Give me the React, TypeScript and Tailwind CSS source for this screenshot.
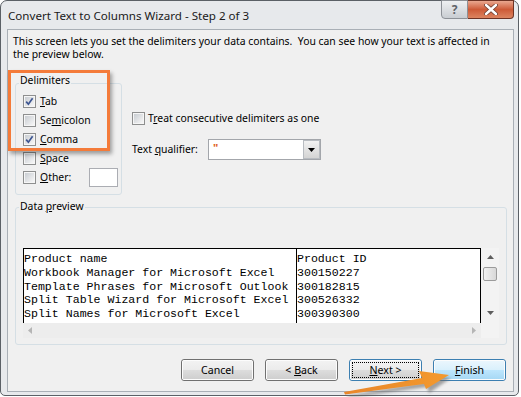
import React from "react";

function Box({ checked = false }: { checked?: boolean }) {
  return (
    <span className="relative flex h-[13px] w-[13px] shrink-0 border border-[#8e8f8f] bg-[#f6f6f6] p-[1px]">
      <span className="block h-full w-full bg-gradient-to-br from-[#c9cdd2] to-[#f7f7f7]" />
      {checked && (
        <svg className="absolute left-0 top-0" width="11" height="11" viewBox="0 0 11 11">
          <path d="M2.2 5.6 L4.4 8.2 L8.6 2.2" fill="none" stroke="#3d5591" strokeWidth="1.7" />
        </svg>
      )}
    </span>
  );
}

function U({ children }: { children: React.ReactNode }) {
  return <span className="underline underline-offset-[1px]">{children}</span>;
}

function Btn({
  children,
  kind = "normal",
}: {
  children: React.ReactNode;
  kind?: "normal" | "default" | "hover";
}) {
  const border =
    kind === "normal" ? "border-[#707070]" : "border-[#3c7fb1]";
  const top =
    kind === "hover"
      ? "bg-gradient-to-b from-[#eaf6fd] to-[#d9f0fc]"
      : "bg-gradient-to-b from-[#f2f2f2] to-[#ebebeb]";
  const bottom =
    kind === "hover"
      ? "bg-gradient-to-b from-[#bee6fd] to-[#a7d9f5]"
      : "bg-gradient-to-b from-[#dddddd] to-[#cfcfcf]";
  return (
    <div className={`relative h-[22px] w-[73px] overflow-hidden rounded-[3px] border ${border}`}>
      <div className="absolute inset-0 flex flex-col rounded-[2px] border border-[#fcfcfc]">
        <div className={`h-1/2 ${top}`} />
        <div className={`h-1/2 ${bottom}`} />
      </div>
      {kind === "default" && (
        <div className="absolute inset-[2px] border border-dotted border-black" />
      )}
      <div className="relative flex h-full items-center justify-center whitespace-pre text-[10.6px] leading-[13px] text-black">
        {children}
      </div>
    </div>
  );
}

const rows: [string, string][] = [
  ["Product name", "Product ID"],
  ["Workbook Manager for Microsoft Excel", "300150227"],
  ["Template Phrases for Microsoft Outlook", "300182815"],
  ["Split Table Wizard for Microsoft Excel", "300526332"],
  ["Split Names for Microsoft Excel", "300390300"],
];

export default function App() {
  return (
    <div className="relative h-[397px] w-[521px] overflow-hidden bg-white font-['Noto_Sans',sans-serif] text-[10.4px] text-black">
      <div className="relative flex h-[396px] w-[519px] flex-col rounded-t-[7px] rounded-b-[5px] border border-[#5b6066] bg-[#e7e9ec] pb-[3px] pl-[6px] pr-[4px]">
        {/* title bar */}
        <div className="flex h-[28px] items-center whitespace-nowrap pl-[1px] pt-[2px] text-[11.6px] text-[#1a1a1a]">
          Convert Text to Columns Wizard - Step 2 of 3
        </div>
        <div className="absolute right-[4px] top-[-1px] flex">
          <div className="flex h-[19px] w-[27px] items-center justify-center rounded-bl-[4px] border border-[#8d9197] bg-gradient-to-b from-[#eef0f2] to-[#c9cdd2] text-[12px] font-bold text-[#5f6368]">
            ?
          </div>
          <div className="flex h-[19px] w-[46px] items-center justify-center rounded-br-[4px] border border-l-0 border-[#6e3324] bg-gradient-to-b from-[#e9a78f] via-[#cd5a37] to-[#dc8460]">
            <svg width="14" height="11" viewBox="0 0 14 11">
              <path d="M2 1 L12 10 M12 1 L2 10" stroke="#6a3b2f" strokeWidth="4" strokeLinecap="round" />
              <path d="M2 1 L12 10 M12 1 L2 10" stroke="#ffffff" strokeWidth="2.4" strokeLinecap="round" />
            </svg>
          </div>
        </div>

        {/* client */}
        <div className="flex flex-1 flex-col border border-[#a9afb6] bg-[#f0f0f0]">
          <p className="whitespace-nowrap pl-[5px] pt-[5px] text-[10.4px] leading-[13px]">
            This screen lets you set the delimiters your data contains.&nbsp; You can see how your text is affected in
            <br />
            the preview below.
          </p>

          <div className="ml-[7px] mt-[22px] flex">
            {/* Delimiters */}
            <div className="relative h-[112px] w-[107px] rounded-[3px] border border-[#d5dfe5]">
              <span className="absolute left-[3px] top-[-10px] whitespace-nowrap bg-[#f0f0f0] px-[1px] leading-[13px]">Delimiters</span>
              <div className="flex flex-col pl-[7px] pt-[8px]">
                <div className="flex h-[19px] items-center gap-[4px]">
                  <Box checked />
                  <span className="leading-[13px]"><U>T</U>ab</span>
                </div>
                <div className="flex h-[19px] items-center gap-[4px]">
                  <Box />
                  <span className="leading-[13px]">Se<U>m</U>icolon</span>
                </div>
                <div className="flex h-[19px] items-center gap-[4px]">
                  <Box checked />
                  <span className="leading-[13px]"><U>C</U>omma</span>
                </div>
                <div className="flex h-[19px] items-center gap-[4px]">
                  <Box />
                  <span className="leading-[13px]"><U>S</U>pace</span>
                </div>
                <div className="flex h-[19px] items-center gap-[4px]">
                  <Box />
                  <span className="w-[45px] leading-[13px]"><U>O</U>ther:</span>
                  <div className="h-[19px] w-[29px] border border-[#abadb3] bg-white" />
                </div>
              </div>
            </div>

            {/* options */}
            <div className="ml-[10px] flex flex-col pt-[29px]">
              <div className="flex h-[13px] items-center gap-[3px]">
                <Box />
                <span className="whitespace-nowrap leading-[13px]">T<U>r</U>eat consecutive delimiters as one</span>
              </div>
              <div className="mt-[14px] flex items-center">
                <span className="w-[76px] whitespace-nowrap leading-[13px]">Text <U>q</U>ualifier:</span>
                <div className="flex h-[21px] w-[113px] border border-[#a3a6ab] bg-white">
                  <span className="flex-1 pl-[4px] pt-[1px] text-[11px] font-bold leading-[13px] text-[#e0601e]">"</span>
                  <div className="flex w-[17px] items-center justify-center border border-[#b8bcc1] bg-gradient-to-b from-[#f2f2f2] to-[#d4d4d4]">
                    <svg width="7" height="4" viewBox="0 0 7 4">
                      <path d="M0 0 H7 L3.5 4 Z" fill="#000" />
                    </svg>
                  </div>
                </div>
              </div>
            </div>
          </div>

          {/* Data preview */}
          <div className="relative ml-[7px] mt-[12px] h-[138px] w-[492px] rounded-[3px] border border-[#d5dfe5]">
            <span className="absolute left-[3px] top-[-8px] whitespace-nowrap bg-[#f0f0f0] px-[1px] leading-[13px]">
              Data <U>p</U>review
            </span>
            <div className="flex pl-[7px] pt-[40px]">
              <div className="flex w-[458px] flex-col">
                <div className="flex h-[75px] border-l border-r border-t border-black bg-white font-['Liberation_Mono',monospace] text-[11.6px] leading-[13.8px] text-black">
                  <div className="w-[273px] whitespace-pre border-r border-black pt-[3px]">
                    {rows.map((r) => (
                      <div key={r[0]}>{r[0]}</div>
                    ))}
                  </div>
                  <div className="flex-1 whitespace-pre pt-[3px]">
                    {rows.map((r) => (
                      <div key={r[0]}>{r[1]}</div>
                    ))}
                  </div>
                </div>
                <div className="flex h-[15px] items-center justify-between bg-[#ededed] px-[5px]">
                  <svg width="4" height="7" viewBox="0 0 4 7">
                    <path d="M4 0 V7 L0 3.5 Z" fill="#b5b5b5" />
                  </svg>
                  <svg width="4" height="7" viewBox="0 0 4 7">
                    <path d="M0 0 V7 L4 3.5 Z" fill="#b5b5b5" />
                  </svg>
                </div>
              </div>
              <div className="flex h-[90px] w-[18px] flex-col items-center bg-[#f3f3f3]">
                <div className="flex h-[17px] items-center">
                  <svg width="7" height="4" viewBox="0 0 7 4">
                    <path d="M0 4 H7 L3.5 0 Z" fill="#5e5e5e" />
                  </svg>
                </div>
                <div className="mt-[2px] h-[14px] w-[14px] rounded-[2px] border border-[#9b9b9b] bg-gradient-to-r from-[#f1f1f1] to-[#d8d8d8]" />
                <div className="flex-1" />
                <div className="mb-[20px] flex h-[10px] items-center">
                  <svg width="7" height="4" viewBox="0 0 7 4">
                    <path d="M0 0 H7 L3.5 4 Z" fill="#5e5e5e" />
                  </svg>
                </div>
              </div>
            </div>
          </div>

          {/* buttons */}
          <div className="mb-[10px] mt-auto flex justify-end gap-[11px] pr-[7px]">
            <Btn>Cancel</Btn>
            <Btn>&lt; <U>B</U>ack</Btn>
            <Btn kind="default"><U>N</U>ext &gt;</Btn>
            <Btn kind="hover"><U>F</U>inish</Btn>
          </div>
        </div>
      </div>

      {/* orange highlight box */}
      <div className="pointer-events-none absolute left-[8px] top-[70px] h-[81px] w-[102px] border-[3px] border-[#f47b3a] shadow-[2px_3px_4px_rgba(0,0,0,0.35)]" />

      {/* orange arrow */}
      <svg className="pointer-events-none absolute left-0 top-0" width="521" height="397" viewBox="0 0 521 397">
        <defs>
          <filter id="blur" x="-20%" y="-50%" width="140%" height="200%">
            <feGaussianBlur stdDeviation="1.5" />
          </filter>
          <linearGradient id="og" x1="0" y1="0" x2="1" y2="0">
            <stop offset="0" stopColor="#e9862a" />
            <stop offset="1" stopColor="#f39a2e" />
          </linearGradient>
        </defs>
        <path
          d="M345 394 L423 380 L421 373 L449 376 L427 391 L425 385 L346 396 Z"
          fill="#6b6b6b"
          opacity="0.6"
          filter="url(#blur)"
          transform="translate(2 2)"
        />
        <path d="M344 392 L422 378 L419 371 L449 375 L426 389 L424 384 L345 394.5 Z" fill="url(#og)" />
      </svg>
    </div>
  );
}
